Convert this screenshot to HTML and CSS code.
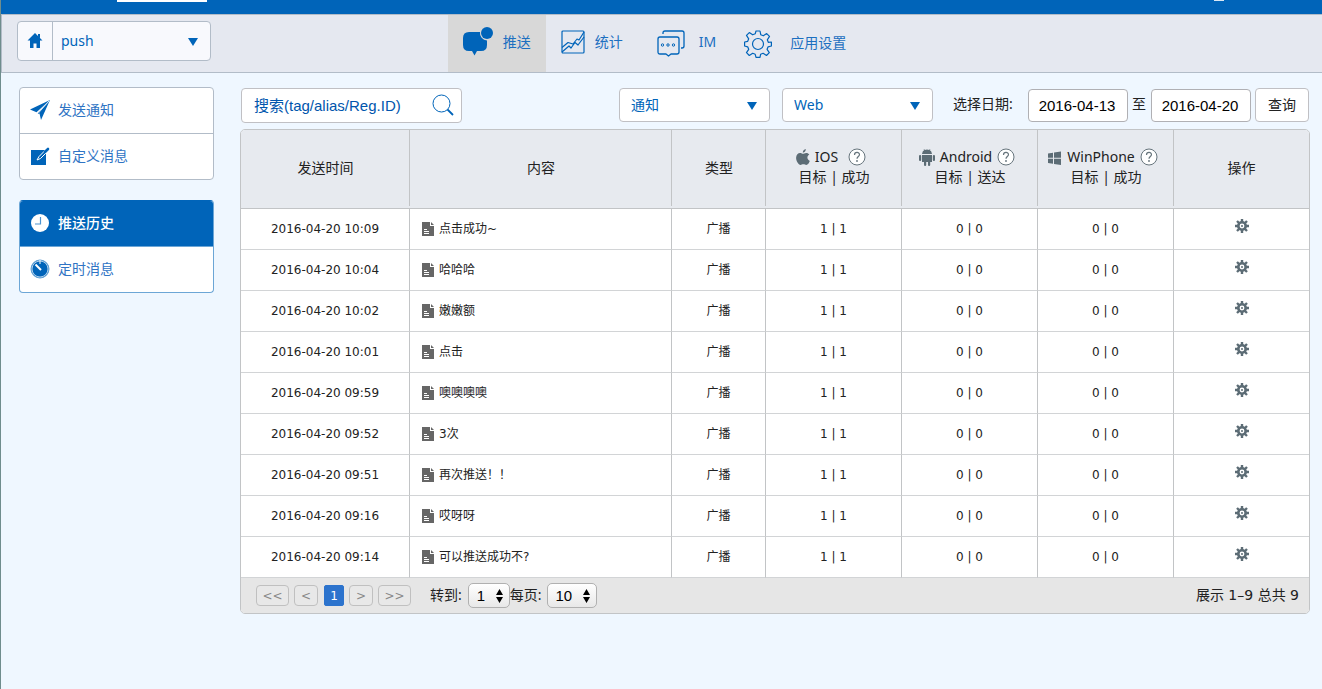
FILE: index.html
```html
<!DOCTYPE html>
<html lang="zh-CN">
<head>
<meta charset="utf-8">
<title>推送历史</title>
<link rel="stylesheet" href="styles.css">
</head>
<body>
<svg class="sprite" aria-hidden="true">
  <symbol id="doc" viewBox="0 0 12 14"><path fill="#666" d="M0 0h8v4h4v10H0z"/><path fill="#666" d="M9 0l3 3H9z"/><path stroke="#fff" d="M2 7.500h3M2 9.500h5M2 11.500h5"/></symbol>
  <symbol id="cog" viewBox="0 0 14 14"><g fill="none" stroke="#5c6c75"><circle cx="7" cy="7" r="3.700" stroke-width="2.600"/><path stroke-width="2.400" d="M7 0v3M7 11v3M0 7h3M11 7h3M2 2l2 2M10 10l2 2M12 2l-2 2M4 10l-2 2"/></g><circle cx="7" cy="7" r="1" fill="#5c6c75"/></symbol>
  <symbol id="help" viewBox="0 0 18 18"><circle cx="9" cy="9" r="8" fill="#fff" stroke="#66747c"/><path d="M6.500 7c0-3.400 5-3.400 5-.4 0 1.900-2.500 2-2.500 4.200" fill="none" stroke="#66747c" stroke-width="1.200"/><circle cx="9" cy="13" r=".9" fill="#66747c"/></symbol>
  <symbol id="down" viewBox="0 0 10 8"><path d="M0 0h10L5 8z" fill="#0064b9"/></symbol>
  <symbol id="updown" viewBox="0 0 7 14"><path d="M0 6l3.500-6L7 6zM0 8l3.500 6L7 8z"/></symbol>
</svg>
<div class="page">
  <div class="brandbar"><span class="brand-tab"></span><span class="brand-mark"></span></div>
  <header class="toolbar">
    <div class="app-picker">
      <a class="home" href="#" aria-label="首页"><svg width="16" height="16" viewBox="0 0 16 16" fill="#0064b9"><path d="M8 0l7.500 7.500H13V15H9.500v-4.500h-3V15H3V7.500H.500zM11 1h2v4l-2-2z"/></svg></a>
      <div class="picker"><select aria-label="应用"><option>push</option></select><svg class="arrow" width="10" height="8"><use href="#down"/></svg></div>
    </div>
    <nav class="nav">
      <a class="nav-item active" href="#"><svg width="31" height="30" viewBox="0 0 31 30" fill="#0064b9"><path d="M7 5h11a7.500 7.500 0 0 0 7 8.500V18q0 6-6 6h-4l-2.500 4.500L10 24H7q-6 0-6-6v-7q0-6 6-6z"/><circle cx="25" cy="6" r="6"/></svg><span>推送</span></a>
      <a class="nav-item chart" href="#"><svg width="24" height="24" viewBox="0 0 24 24" fill="none" stroke="#0064b9" stroke-width="1.200" stroke-linejoin="round"><rect x="1" y="1" width="22" height="22" rx="1"/><path d="M1 17.500l6-5 5 1.500 4-5 2 1L23 2M1 22l7-6 2 2 4-5.500 3 2.500 6-8"/></svg><span>统计</span></a>
      <a class="nav-item im" href="#"><svg width="28" height="27" viewBox="0 0 28 27" fill="none" stroke="#0064b9" stroke-width="1.300" stroke-linejoin="round"><path d="M6 4V3q0-2 2-2h17q2 0 2 2v13q0 2-2 2h-1"/><path d="M3 7h17q2 0 2 2v13q0 2-2 2h-6l-2.500 2L9 24H3q-2 0-2-2V9q0-2 2-2z"/><g stroke-width="1"><circle cx="5.500" cy="15" r="1.200"/><circle cx="11" cy="15" r="1.200"/><circle cx="16.500" cy="15" r="1.200"/></g></svg><span>IM</span></a>
      <a class="nav-item settings" href="#"><svg width="28" height="28" viewBox="0 0 28 28" fill="none" stroke="#0064b9" stroke-width="1.200" stroke-linejoin="round"><circle cx="14" cy="14" r="5.500"/><path d="M12 1h4l.8 3.800 2.500 1 3.400-2.200 2.800 2.800-2.200 3.400 1 2.500L27.400 12v4l-3.300.8-1 2.500 2.200 3.400-2.800 2.800-3.400-2.200-2.500 1L16 27.400h-4l-.8-3.100-2.500-1-3.400 2.200-2.800-2.800 2.200-3.400-1-2.500L.6 16v-4l3.100-.7 1-2.500-2.200-3.400 2.800-2.800 3.400 2.200 2.500-1z"/></svg><span>应用设置</span></a>
    </nav>
  </header>
  <div class="body">
    <aside class="sidebar">
      <div class="menu">
        <a class="menu-item" href="#"><svg width="20" height="20" viewBox="0 0 20 20" fill="#0064b9"><path d="M20 0L0 9.500l6.500 2.800zM20 0L7.800 13l.2 1 1.500-.5L11 20z"/><path d="M19 1L8 13.500" stroke="#fff" stroke-width=".8"/></svg>发送通知</a>
        <a class="menu-item" href="#"><svg width="20" height="20" viewBox="0 0 20 20"><path fill="#0064b9" d="M1 4h15v15H1z"/><path d="M16.500 3L9 10.500 7 14l3.500-1.500L18 5z" fill="#0064b9" stroke="#fff"/><path d="M18 3l-3 3" stroke="#0064b9" stroke-width="2.600" stroke-linecap="round"/></svg>自定义消息</a>
      </div>
      <div class="menu history">
        <a class="menu-item current" href="#"><svg width="20" height="20" viewBox="0 0 20 20"><circle cx="10" cy="10" r="9" fill="#fff"/><path d="M10.500 4v7H5" fill="none" stroke="#4c94d0" stroke-width="1.200"/></svg>推送历史</a>
        <a class="menu-item" href="#"><svg width="20" height="20" viewBox="0 0 20 20"><circle cx="10" cy="10" r="9" fill="#0064b9" stroke="#5e9fd4"/><circle cx="10" cy="10" r="8" fill="none" stroke="#fff" stroke-width=".7"/><path d="M5.500 5.500L11 11" stroke="#fff" stroke-width="2"/><path d="M10 1v4" stroke="#fff"/></svg>定时消息</a>
      </div>
    </aside>
    <main class="content">
      <form class="filters">
        <div class="search"><input type="text" aria-label="搜索" placeholder="搜索(tag/alias/Reg.ID)"><button type="button" aria-label="搜索"><svg width="22" height="22" viewBox="0 0 22 22" fill="none" stroke="#0064b9"><circle cx="9.500" cy="9.500" r="8.500"/><path d="M15.500 15.500L21 21" stroke-width="1.800"/></svg></button></div>
        <div class="picker boxed"><select aria-label="类型"><option>通知</option></select><svg class="arrow" width="10" height="8"><use href="#down"/></svg></div>
        <div class="picker boxed"><select aria-label="来源"><option>Web</option></select><svg class="arrow" width="10" height="8"><use href="#down"/></svg></div>
        <div class="dates"><label for="from">选择日期:</label><input id="from" type="text" value="2016-04-13"><label class="to" for="until">至</label><input id="until" type="text" value="2016-04-20"><button class="query" type="button">查询</button></div>
      </form>
      <div class="panel">
        <table>
          <colgroup><col class="c-time"><col><col class="c-type"><col class="c-stat"><col class="c-stat"><col class="c-stat"><col class="c-action"></colgroup>
          <thead><tr>
            <th>发送时间</th><th>内容</th><th>类型</th>
            <th class="stat"><div class="platform"><svg width="14" height="16" viewBox="0 0 14 16" fill="#5c6c75"><path d="M9.800 0c.2 1.800-1.200 3.600-3 3.700C6.600 2 8.200.2 9.800 0zM7 4.800c.8 0 1.600-.9 3.200-.9 1.300 0 2.500.7 3.100 1.700-2.800 1.600-2.300 5.200.5 6.300-.6 1.700-2 4-3.500 4-1.100 0-1.500-.7-2.900-.7-1.400 0-1.900.7-2.900.7C2.600 15.900 0 12 .1 8.800.200 5.700 2.100 4 4 4c1.400 0 2.300.8 3 .8z"/></svg><span>IOS</span><svg class="help ios" width="18" height="18"><use href="#help"/></svg></div>目标 | 成功</th>
            <th class="stat"><div class="platform"><svg width="16" height="17" viewBox="0 0 16 17" fill="#5c6c75"><path d="M3 5q.3-3 2.300-3.900L4.500 0l.4-.2 1 1.100q2.100-.6 4.200 0l1-1.100.4.200-.8 1.100Q12.700 2 13 5zM3 6h10v7H3z"/><rect y="6" width="2.200" height="6" rx="1"/><rect x="13.800" y="6" width="2.200" height="6" rx="1"/><rect x="5" y="11" width="2.200" height="6" rx="1"/><rect x="9" y="11" width="2.200" height="6" rx="1"/></svg><span>Android</span><svg class="help" width="18" height="18"><use href="#help"/></svg></div>目标 | 送达</th>
            <th class="stat"><div class="platform"><svg class="win" width="14" height="16" viewBox="0 0 14 16" fill="#5c6c75"><path d="M0 4.500l5-.8v5H0zM6 3.500L13 2.500v6.200H6zM0 9.700h5v5l-5-.8zM6 9.700h7v6.200l-7-1z"/></svg><span>WinPhone</span><svg class="help" width="18" height="18"><use href="#help"/></svg></div>目标 | 成功</th>
            <th>操作</th>
          </tr></thead>
          <tbody>
            <tr><td>2016-04-20 10:09</td><td class="message"><svg width="12" height="14"><use href="#doc"/></svg>点击成功~</td><td>广播</td><td>1 | 1</td><td>0 | 0</td><td>0 | 0</td><td><button class="cog" type="button" aria-label="操作"><svg width="14" height="14"><use href="#cog"/></svg></button></td></tr>
            <tr><td>2016-04-20 10:04</td><td class="message"><svg width="12" height="14"><use href="#doc"/></svg>哈哈哈</td><td>广播</td><td>1 | 1</td><td>0 | 0</td><td>0 | 0</td><td><button class="cog" type="button" aria-label="操作"><svg width="14" height="14"><use href="#cog"/></svg></button></td></tr>
            <tr><td>2016-04-20 10:02</td><td class="message"><svg width="12" height="14"><use href="#doc"/></svg>嫩嫩额</td><td>广播</td><td>1 | 1</td><td>0 | 0</td><td>0 | 0</td><td><button class="cog" type="button" aria-label="操作"><svg width="14" height="14"><use href="#cog"/></svg></button></td></tr>
            <tr><td>2016-04-20 10:01</td><td class="message"><svg width="12" height="14"><use href="#doc"/></svg>点击</td><td>广播</td><td>1 | 1</td><td>0 | 0</td><td>0 | 0</td><td><button class="cog" type="button" aria-label="操作"><svg width="14" height="14"><use href="#cog"/></svg></button></td></tr>
            <tr><td>2016-04-20 09:59</td><td class="message"><svg width="12" height="14"><use href="#doc"/></svg>噢噢噢噢</td><td>广播</td><td>1 | 1</td><td>0 | 0</td><td>0 | 0</td><td><button class="cog" type="button" aria-label="操作"><svg width="14" height="14"><use href="#cog"/></svg></button></td></tr>
            <tr><td>2016-04-20 09:52</td><td class="message"><svg width="12" height="14"><use href="#doc"/></svg>3次</td><td>广播</td><td>1 | 1</td><td>0 | 0</td><td>0 | 0</td><td><button class="cog" type="button" aria-label="操作"><svg width="14" height="14"><use href="#cog"/></svg></button></td></tr>
            <tr><td>2016-04-20 09:51</td><td class="message"><svg width="12" height="14"><use href="#doc"/></svg>再次推送！！</td><td>广播</td><td>1 | 1</td><td>0 | 0</td><td>0 | 0</td><td><button class="cog" type="button" aria-label="操作"><svg width="14" height="14"><use href="#cog"/></svg></button></td></tr>
            <tr><td>2016-04-20 09:16</td><td class="message"><svg width="12" height="14"><use href="#doc"/></svg>哎呀呀</td><td>广播</td><td>1 | 1</td><td>0 | 0</td><td>0 | 0</td><td><button class="cog" type="button" aria-label="操作"><svg width="14" height="14"><use href="#cog"/></svg></button></td></tr>
            <tr><td>2016-04-20 09:14</td><td class="message"><svg width="12" height="14"><use href="#doc"/></svg>可以推送成功不?</td><td>广播</td><td>1 | 1</td><td>0 | 0</td><td>0 | 0</td><td><button class="cog" type="button" aria-label="操作"><svg width="14" height="14"><use href="#cog"/></svg></button></td></tr>
          </tbody>
        </table>
        <div class="pager">
          <div class="pages"><button class="wide" type="button">&lt;&lt;</button><button type="button">&lt;</button><button class="on" type="button">1</button><button type="button">&gt;</button><button class="wide" type="button">&gt;&gt;</button></div>
          <label for="goto">转到:</label><div class="stepper"><select id="goto"><option>1</option></select><svg width="7" height="14"><use href="#updown"/></svg></div>
          <label for="size">每页:</label><div class="stepper size"><select id="size"><option>10</option></select><svg width="7" height="14"><use href="#updown"/></svg></div>
          <span class="total">展示 1–9 总共 9</span>
        </div>
      </div>
    </main>
  </div>
</div>
</body>
</html>
```
FILE: styles.css
```css
* { box-sizing: border-box; }
body {
  margin: 0;
  background: #eff7ff;
  color: #222;
  font: 14px/20px "Noto Sans", "Noto Sans CJK SC", sans-serif;
}
svg { display: block; flex: none; }
a { text-decoration: none; color: #2f74c4; }
button, select, input { font: inherit; color: inherit; margin: 0; }
button { cursor: pointer; }
select { appearance: none; width: 100%; height: 100%; border: 0; background: transparent; }
.sprite { position: absolute; width: 0; height: 0; }
.page { min-height: 100vh; border-left: 1px solid #6f8d8d; }

.brandbar {
  display: flex;
  justify-content: space-between;
  height: 14px;
  padding: 0 98px 0 116px;
  background: #0064b9;
}
.brand-tab { width: 90px; height: 2px; background: #fff; }
.brand-mark { width: 10px; height: 1px; background: #d9e8f5; }

.toolbar {
  display: grid;
  grid-template-columns: 1fr auto 1fr;
  height: 59px;
  border: solid #b2bcc8;
  border-width: 1px 0 1px 1px;
  background: #e5e8f0;
}
.app-picker {
  display: flex;
  width: 194px;
  height: 40px;
  margin: 6px 0 0 15px;
  border: 1px solid #b2bcc8;
  border-radius: 4px;
  background: #f8f9fd;
}
.home {
  display: grid;
  place-items: center;
  width: 35px;
  border-right: 1px solid #b2bcc8;
}
.picker { position: relative; flex: 1; color: #0064b9; }
.picker select { padding: 0 32px 0 8px; }
.arrow { position: absolute; right: 12px; top: 50%; margin-top: -3px; pointer-events: none; }

.nav { display: flex; padding-right: 16px; }
.nav-item {
  display: flex;
  align-items: center;
  gap: 10px;
  padding: 0 15px 4px 14px;
  color: #1c6fc0;
}
.nav-item.active { background: #d8d8d8; }
.nav-item.chart { padding-left: 15px; padding-right: 14px; }
.nav-item.im { gap: 14px; padding: 0 14px 0 20px; }
.nav-item.im span { padding-bottom: 4px; }
.nav-item.settings { gap: 18px; padding: 0 14px 0 14px; }
.nav-item.settings span { padding-bottom: 2px; }

.body { display: flex; gap: 26px; padding: 14px 12px 0 18px; }
.sidebar { width: 195px; flex: none; }
.menu { border: 1px solid #b2bcc8; border-radius: 4px; background: #fff; overflow: hidden; }
.menu + .menu { margin-top: 20px; }
.menu-item { display: flex; align-items: center; gap: 8px; height: 45px; padding: 0 0 2px 10px; }
.menu-item + .menu-item { height: 46px; border-top: 1px solid #b2bcc8; }
.menu.history { border-color: #6ca6d6; border-top-color: #0064b9; }
.menu-item.current { margin: 0 -1px; padding-left: 11px; background: #0064b9; color: #fff; font-weight: 500; }
.menu.history .menu-item + .menu-item { border-color: #6ca6d6; }

.content { flex: 1; min-width: 0; }
.filters { display: flex; align-items: flex-start; gap: 12px; padding: 1px 1px 0; height: 42px; }
.search, .boxed, .dates input, .query {
  height: 35px;
  border: 1px solid #c0c0c4;
  border-radius: 4px;
  background: #fff;
}
.search { display: flex; align-items: center; width: 221px; margin-right: auto; }
.search input {
  flex: 1;
  min-width: 0;
  height: 33px;
  padding: 0 0 0 12px;
  border: 0;
  background: none;
  font: 15px/20px "Liberation Sans", "Noto Sans CJK SC", sans-serif;
}
.search input::placeholder { color: #0055ad; opacity: 1; }
.search button { padding: 0 0 2px; margin-right: 7px; border: 0; background: none; }
.boxed { flex: none; width: 151px; height: 34px; }
.boxed select { padding-left: 11px; }
.dates { display: flex; align-items: center; padding-left: 8px; }
.dates label { width: 75px; padding-bottom: 2px; }
.dates .to { width: 23px; padding-left: 4px; }
.dates > * { flex: none; }
.dates input {
  width: 100px;
  height: 33px;
  margin-top: 1px;
  padding: 0 2px 0 0;
  border-color: #b0b0b4;
  text-align: center;
  color: #000;
  font: 15px/20px "Liberation Sans", sans-serif;
}
.query { width: 54px; height: 34px; margin-left: 4px; padding: 0; }

.panel { border: 1px solid #c2c4c6; border-radius: 5px; overflow: hidden; background: #fff; }
table { width: 100%; border-collapse: separate; border-spacing: 0; table-layout: fixed; }
.c-time { width: 169px; }
.c-type { width: 94px; }
.c-stat { width: 136px; }
.c-action { width: 135px; }
th {
  height: 79px;
  padding: 0 0 2px;
  border-bottom: 1px solid #c2c4c6;
  background: #e7eaef linear-gradient(#c2c4c6, #c2c4c6) no-repeat right top / 1px 76px;
  font-weight: 400;
}
th.stat { padding-bottom: 4px; }
th:last-child { background-image: none; }
td {
  height: 41px;
  padding: 0;
  border: solid #d2d4d6;
  border-width: 0 1px 1px 0;
  border-right-color: #c2c4c6;
  text-align: center;
  font: 12px/20px "DejaVu Sans", "Noto Sans CJK SC", sans-serif;
}
td:last-child { border-right: 0; }
.platform { display: flex; justify-content: center; align-items: center; gap: 5px; padding-right: 6px; }
.help.ios { margin-left: 5px; }
.message { text-align: left; padding-left: 12px; }
.message svg { display: inline-block; vertical-align: -3px; margin-right: 5px; }
.cog { display: inline-block; padding: 0 0 6px; border: 0; background: none; vertical-align: middle; }

.pager { display: flex; align-items: center; height: 35px; padding: 0 10px 0 15px; background: #e6e6e6; }
.pages { display: flex; gap: 5px; margin-right: 19px; }
.pages button {
  width: 24px;
  height: 21px;
  padding: 0;
  border: 1px solid #c0c0c0;
  border-radius: 4px;
  background: #e8e8e8;
  color: #888;
  font: 12px/18px "DejaVu Sans", sans-serif;
}
.pages .wide { width: 33px; }
.pages .on { width: 20px; margin-left: 1px; border-color: #2c73cd; border-radius: 2px; background: #2c73cd; color: #fff; }
.pager label, .total { padding-bottom: 2px; }
.stepper { position: relative; width: 42px; height: 25px; margin-left: 6px; }
.stepper select {
  padding: 0 0 0 8px;
  border: 1px solid #b0b0b0;
  border-radius: 5px;
  background: linear-gradient(#fff, #e8e8e8);
  color: #000;
  font: 15px/20px "Liberation Sans", sans-serif;
}
.stepper.size { width: 50px; margin-left: 5px; }
.stepper svg { position: absolute; right: 7px; top: 6px; pointer-events: none; }
.total { margin-left: auto; font-family: "DejaVu Sans", "Noto Sans CJK SC", sans-serif; }
```
